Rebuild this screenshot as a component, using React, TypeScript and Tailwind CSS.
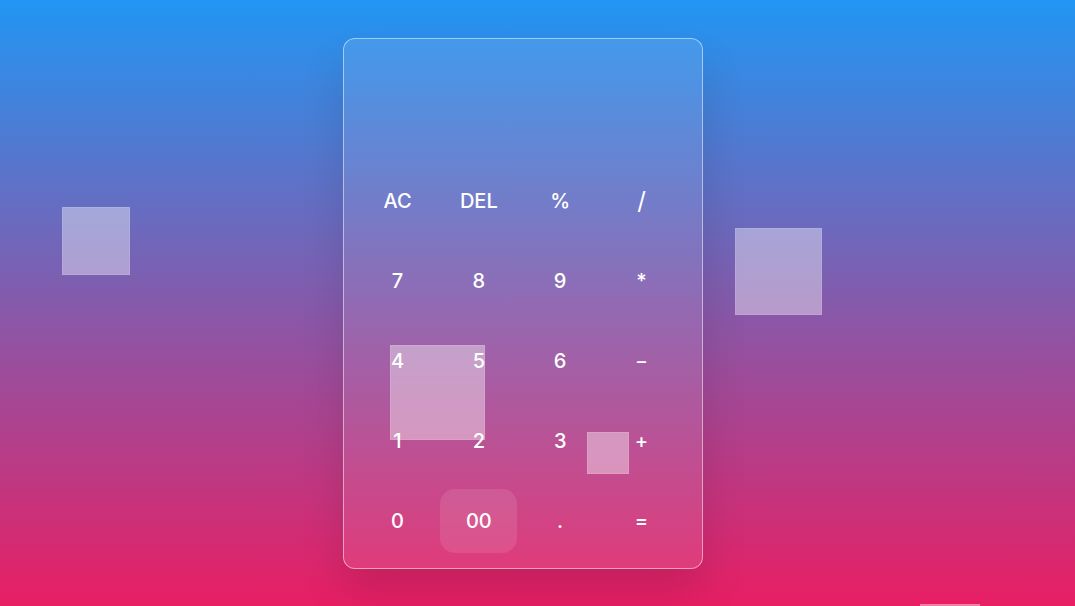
import React from 'react';

const keys = ['AC', 'DEL', '%', '/', '7', '8', '9', '*', '4', '5', '6', '-', '1', '2', '3', '+', '0', '00', '.', '='];

// decorative floating squares
const squares = [
  { cls: 'left-[62px] top-[207px] w-[68px] h-[68px]' },
  { cls: 'left-[735px] top-[228px] w-[87px] h-[87px]' },
  { cls: 'left-[390px] top-[345px] w-[95px] h-[95px]' },
  { cls: 'left-[587px] top-[432px] w-[42px] h-[42px]' },
  { cls: 'left-[920px] top-[604px] w-[60px] h-[60px]' },
];

const App = () => {
  return (
    <div
      className="relative w-full h-[606px] overflow-hidden bg-linear-to-b/srgb from-[#2196f3] to-[#e91e63] flex justify-center pt-[38px] pr-[29px]"
      style={{ fontFamily: 'Inter, "Noto Sans", sans-serif' }}
    >
      <div className="w-[360px] h-[531px] rounded-[12px] border border-white/50 bg-white/10 shadow-[0_25px_45px_rgba(0,0,0,0.12)] flex flex-col">
        {/* display */}
        <div className="h-[130px]" />
        <div className="grid grid-cols-[repeat(4,77px)] gap-x-[4.33px] gap-y-[16px] pl-[15px]">
          {keys.map((k) => (
            <button
              key={k}
              className={`h-[64px] rounded-[15px] text-white text-[20px] font-medium flex items-center justify-center ${
                k === '00' ? 'bg-white/10' : ''
              }`}
            >
              {k === '/' ? <span className="text-[24px] font-normal">/</span> : k === '-' ? <span className="text-[18px]">–</span> : k}
            </button>
          ))}
        </div>
      </div>
      {squares.map((s, i) => (
        <div key={i} className={`absolute ${s.cls} bg-white/40 border border-white/10`} />
      ))}
    </div>
  );
};

export default App;
